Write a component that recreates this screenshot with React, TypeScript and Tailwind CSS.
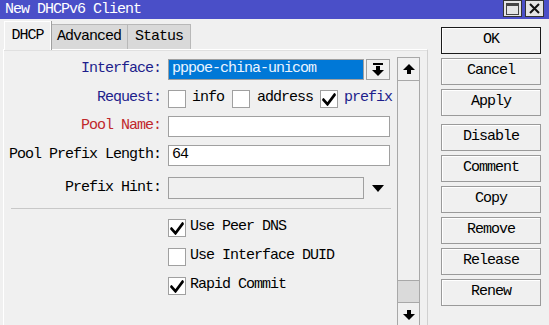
import React from 'react';

const font = 'font-mono text-[15px] tracking-[-1px]';

function Check({ checked }: { checked?: boolean }) {
  return (
    <div className="w-[18px] h-[18px] bg-white border border-[#a0a0a0] flex items-center justify-center shrink-0">
      {checked && (
        <svg width="14" height="14" viewBox="0 0 14 14">
          <path d="M1.5 7 L5.5 11.5 L12.5 2 L13 3 L5.5 13 L1 8 Z" fill="#000" stroke="#000" strokeWidth="1.8" strokeLinejoin="round" />
        </svg>
      )}
    </div>
  );
}

function Label({ children, color = 'text-black' }: { children: React.ReactNode; color?: string }) {
  return <div className={`w-[158px] text-right pr-[1px] ${color}`}>{children}</div>;
}

function Btn({ children, primary, className = '' }: { children: React.ReactNode; primary?: boolean; className?: string }) {
  return (
    <div
      className={`h-[27px] w-[100px] flex items-center justify-center bg-[#f0f0f0] border shadow-[inset_1px_1px_0_#fff] ${
        primary ? 'border-[#1a1a1a]' : 'border-[#9a9a9a]'
      } ${className}`}
    >
      {children}
    </div>
  );
}

const ArrowDown = () => (
  <svg width="12" height="10" viewBox="0 0 12 10">
    <rect x="4" y="0" width="4" height="4" fill="#000" />
    <path d="M0 4 H12 L6 10 Z" fill="#000" />
  </svg>
);

const ArrowUp = () => (
  <svg width="12" height="10" viewBox="0 0 12 10">
    <path d="M0 6 H12 L6 0 Z" fill="#000" />
    <rect x="4" y="6" width="4" height="4" fill="#000" />
  </svg>
);

export default function App() {
  return (
    <div className={`w-[549px] h-[325px] overflow-hidden bg-[#f0f0f0] flex flex-col ${font}`}>
      {/* title bar */}
      <div className="h-[19px] bg-[#4a4fc8] flex items-start shrink-0">
        <span className="text-white pl-[5px] pt-[1px] leading-[17px]">New DHCPv6 Client</span>
        <div className="ml-auto mr-[5px] flex gap-[3px]">
          <div className="w-[19px] h-[17px] bg-[#e4e4e4] border border-[#333] flex items-center justify-center">
            <div className="w-[13px] h-[12px] border border-[#444] border-t-[3px]" />
          </div>
          <div className="w-[19px] h-[17px] bg-[#e4e4e4] border border-[#333] flex items-center justify-center">
            <svg width="11" height="11" viewBox="0 0 11 11">
              <path d="M1 1 L10 10 M10 1 L1 10" stroke="#111" strokeWidth="2" />
            </svg>
          </div>
        </div>
      </div>

      <div className="flex flex-1 min-h-0">
        {/* left side */}
        <div className="w-[428px] pl-[3px] flex flex-col">
          <div className="flex items-end h-[30px] pt-[2px] pl-[1px]">
            <div className="h-[29px] w-[47px] bg-[#f0f0f0] border-t border-l border-r border-[#ffffff] shadow-[1px_0_0_#a0a0a0] flex items-center justify-center relative top-[1px]">
              DHCP
            </div>
            <div className="h-[25px] w-[77px] bg-[#d9d9d9] border-t border-r border-[#b8b8b8] flex items-center justify-center">
              Advanced
            </div>
            <div className="h-[25px] w-[63px] bg-[#d9d9d9] border-t border-r border-[#b8b8b8] flex items-center justify-center">
              Status
            </div>
          </div>

          <div className="flex-1 border-t border-l border-r border-[#d0d0d0] border-l-[#ffffff] border-t-[#ffffff] shadow-[inset_0_1px_0_#e0e0e0] flex">
            {/* form */}
            <div className="w-[393px] flex flex-col">
              <div className="mt-[9px] h-[21px] flex items-center">
                <Label color="text-[#1e1e8c]">Interface:</Label>
                <div className="ml-[6px] w-[196px] h-[21px] bg-[#0078d7] border border-[#a0a0a0] text-[#eaf4ff] flex items-center pl-[3px]">
                  pppoe-china-unicom
                </div>
                <div className="ml-[2px] w-[24px] h-[21px] border border-[#a0a0a0] bg-[#f0f0f0] flex flex-col items-center justify-center">
                  <div className="w-[10px] h-[2px] bg-black mb-[1px]" />
                  <ArrowDown />
                </div>
              </div>

              <div className="mt-[8px] h-[21px] flex items-center">
                <Label color="text-[#1e1e8c]">Request:</Label>
                <div className="ml-[6px] flex items-center">
                  <Check />
                  <span className="ml-[6px]">info</span>
                  <div className="ml-[8px]"><Check /></div>
                  <span className="ml-[7px]">address</span>
                  <div className="ml-[7px]"><Check checked /></div>
                  <span className="ml-[6px] text-[#1e1e8c]">prefix</span>
                </div>
              </div>

              <div className="mt-[7px] h-[21px] flex items-center">
                <Label color="text-[#c0282c]">Pool Name:</Label>
                <div className="ml-[6px] w-[222px] h-[21px] bg-white border border-[#a0a0a0]" />
              </div>

              <div className="mt-[8px] h-[21px] flex items-center">
                <Label>Pool Prefix Length:</Label>
                <div className="ml-[6px] w-[222px] h-[21px] bg-white border border-[#a0a0a0] flex items-center pl-[3px]">
                  64
                </div>
              </div>

              <div className="mt-[11px] h-[22px] flex items-center">
                <Label>Prefix Hint:</Label>
                <div className="ml-[6px] w-[196px] h-[22px] bg-[#f0f0f0] border border-[#a0a0a0]" />
                <svg className="ml-[8px]" width="12" height="7" viewBox="0 0 12 7">
                  <path d="M0 0 H12 L6 7 Z" fill="#000" />
                </svg>
              </div>

              <div className="mt-[9px] ml-[7px] w-[380px] h-[1px] bg-[#c8c8c8]" />

              <div className="mt-[9px] h-[19px] flex items-center pl-[164px]">
                <Check checked />
                <span className="ml-[4px]">Use Peer DNS</span>
              </div>
              <div className="mt-[10px] h-[19px] flex items-center pl-[164px]">
                <Check />
                <span className="ml-[4px]">Use Interface DUID</span>
              </div>
              <div className="mt-[10px] h-[19px] flex items-center pl-[164px]">
                <Check checked />
                <span className="ml-[4px]">Rapid Commit</span>
              </div>
            </div>

            {/* scrollbar */}
            <div className="mt-[7px] w-[23px] h-[270px] border border-[#a8a8a8] bg-[#f0f0f0] flex flex-col shrink-0">
              <div className="h-[23px] border-b border-[#a8a8a8] flex items-center justify-center">
                <ArrowUp />
              </div>
              <div className="flex-1 border-b border-[#a8a8a8]" />
              <div className="h-[22px] bg-[#dadada] border-b border-[#a8a8a8]" />
              <div className="h-[23px] flex items-center justify-center">
                <ArrowDown />
              </div>
            </div>
          </div>
        </div>

        {/* buttons */}
        <div className="ml-[13px] pt-[8px] flex flex-col gap-[4px]">
          <Btn primary>OK</Btn>
          <Btn>Cancel</Btn>
          <Btn>Apply</Btn>
          <Btn className="mt-[4px]">Disable</Btn>
          <Btn>Comment</Btn>
          <Btn>Copy</Btn>
          <Btn>Remove</Btn>
          <Btn>Release</Btn>
          <Btn>Renew</Btn>
        </div>
      </div>
    </div>
  );
}
